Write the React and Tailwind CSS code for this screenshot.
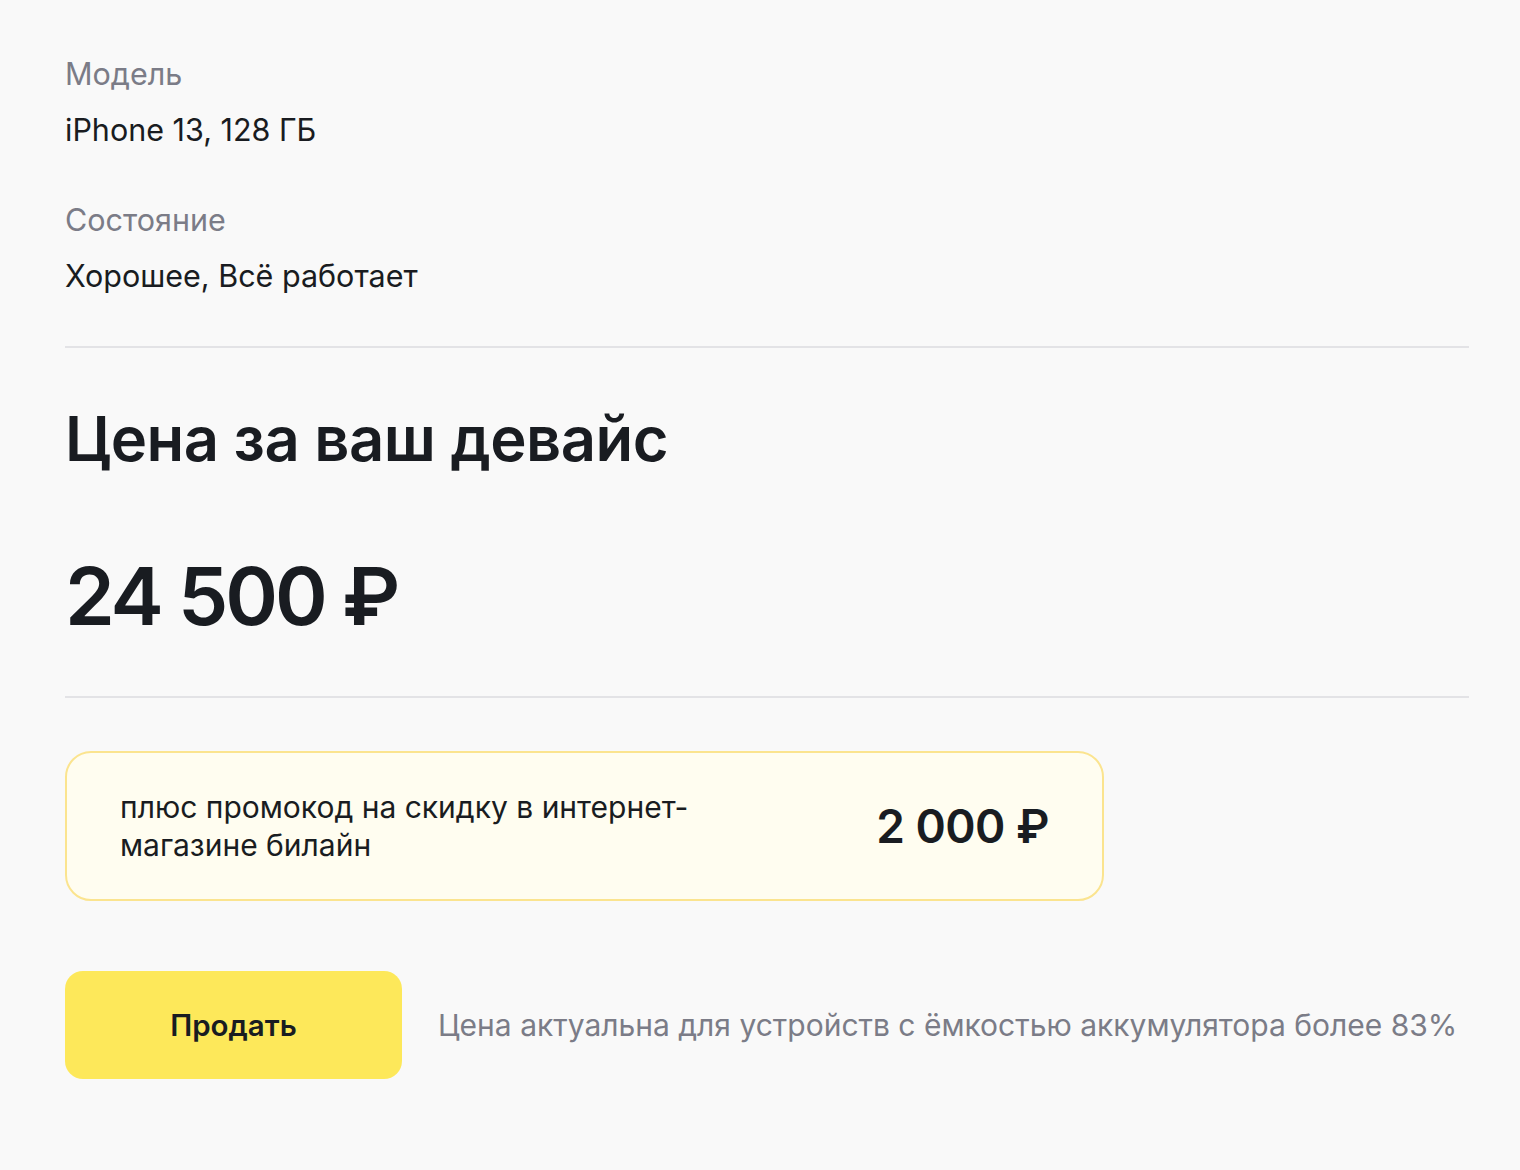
export default function App() {
  return (
    <div className="min-h-[1170px] w-[1520px] bg-[#f9f9f9] pl-[65px] pr-[51px] pt-[52px] text-[#191c21]" style={{ fontFamily: "Inter, 'Noto Sans', sans-serif" }}>
      <div className="text-[30.5px] leading-[44px] text-[#7b7c87]">Модель</div>
      <div className="mt-[12px] text-[30.5px] leading-[44px]">iPhone 13, 128 ГБ</div>
      <div className="mt-[46px] text-[30.5px] leading-[44px] text-[#7b7c87]">Состояние</div>
      <div className="mt-[12px] text-[30.5px] leading-[44px]">Хорошее, Всё работает</div>

      <div className="mt-[48px] h-[2px] bg-[#e3e3e6]" />

      <h1 className="mt-[51px] text-[61.5px] font-semibold leading-[80px] tracking-[-0.5px]">Цена за ваш девайс</h1>
      <div className="mt-[67px] text-[80px] font-semibold leading-[100px] tracking-[-3px]">24 500 ₽</div>

      <div className="mt-[50px] h-[2px] bg-[#e3e3e6]" />

      <div className="mt-[53px] flex h-[150px] w-[1039px] items-center justify-between rounded-[26px] border-2 border-[#fbe48f] bg-[#fffdf0] pl-[53px] pr-[53px]">
        <div className="w-[600px] text-[30px] leading-[38px]">плюс промокод на скидку в интернет-магазине билайн</div>
        <div className="text-[46px] font-semibold tracking-[-0.5px]">2 000 ₽</div>
      </div>

      <div className="mt-[70px] flex items-center gap-[36px]">
        <button className="flex h-[108px] w-[337px] items-center justify-center rounded-[18px] bg-[#fde85a] text-[29.5px] font-semibold">Продать</button>
        <div className="text-[30px] text-[#7b7c87]">Цена актуальна для устройств с ёмкостью аккумулятора более 83%</div>
      </div>
    </div>
  );
}
